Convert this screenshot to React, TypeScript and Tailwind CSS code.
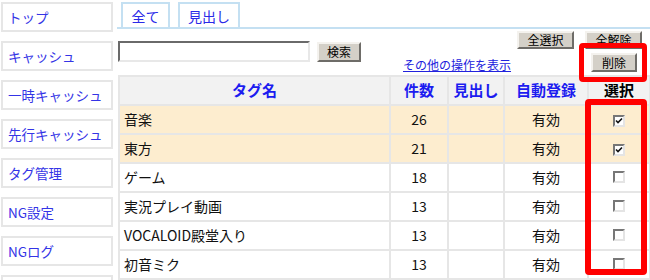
import React from 'react';

const FONT = { fontFamily: '"Noto Sans CJK JP", "Liberation Sans", sans-serif' };

const NAV = ['トップ', 'キャッシュ', '一時キャッシュ', '先行キャッシュ', 'タグ管理', 'NG設定', 'NGログ', ''];

const ROWS = [
  { name: '音楽', count: 26, checked: true },
  { name: '東方', count: 21, checked: true },
  { name: 'ゲーム', count: 18, checked: false },
  { name: '実況プレイ動画', count: 13, checked: false },
  { name: 'VOCALOID殿堂入り', count: 13, checked: false },
  { name: '初音ミク', count: 13, checked: false },
];

function Btn({ children, className = '' }: { children: React.ReactNode; className?: string }) {
  return (
    <button
      className={`flex items-center justify-center bg-[#d4d0c8] border-2 border-t-[#f4f2ee] border-l-[#f4f2ee] border-b-[#6e6c68] border-r-[#6e6c68] text-[12px] leading-none text-black ${className}`}
    >
      {children}
    </button>
  );
}

function Check({ on }: { on: boolean }) {
  return (
    <span className="inline-flex items-center justify-center w-[12px] h-[12px] bg-white border-2 border-t-[#777] border-l-[#777] border-b-[#e4e4e4] border-r-[#e4e4e4]">
      {on && (
        <svg width="8" height="8" viewBox="0 0 8 8">
          <path d="M1 3.5 L3 5.5 L7 1.5" stroke="#111" strokeWidth="1.6" fill="none" />
        </svg>
      )}
    </span>
  );
}

export default function App() {
  return (
    <div className="flex w-[650px] h-[280px] overflow-hidden bg-white text-[13px]" style={FONT}>
      {/* sidebar */}
      <div className="w-[117px] shrink-0 flex flex-col gap-[9px] pl-[1px] pt-[2px]">
        {NAV.map((n, i) => (
          <div key={i} className="w-[112px] h-[30px] shrink-0 border-2 border-[#e6e6e6] flex items-center pl-[5px] text-[13.5px] text-[#3434e6]">
            {n}
          </div>
        ))}
      </div>

      {/* main */}
      <div className="relative flex-1 flex flex-col">
        <div className="flex gap-[8px] pl-[4px] pt-[2px] border-b-2 border-[#c4e0f2] h-[29px]">
          <div className="w-[49px] h-[27px] border-2 border-b-0 border-[#c4e0f2] flex items-center justify-center text-[14px] text-[#2a2ae8]">全て</div>
          <div className="w-[62px] h-[27px] border-2 border-b-0 border-[#c4e0f2] flex items-center justify-center text-[14px] text-[#2a2ae8]">見出し</div>
        </div>

        <div className="flex h-[49px] pl-[1px]">
          <div className="flex items-start gap-[7px] pt-[12px]">
            <input className="w-[192px] h-[21px] bg-white border-2 border-t-[#6a6a6a] border-l-[#6a6a6a] border-b-[#e8e8e8] border-r-[#e8e8e8] outline-none" />
            <Btn className="w-[44px] h-[20px] mt-[1px]">検索</Btn>
          </div>
          <div className="ml-[42px] pt-[26px]">
            <span className="text-[12px] text-[#2222dd] underline">その他の操作を表示</span>
          </div>
          <div className="ml-auto mr-[9px] flex flex-col items-end pt-[2px]">
            <div className="flex gap-[11px]">
              <Btn className="w-[57px] h-[18px]">全選択</Btn>
              <Btn className="w-[57px] h-[18px]">全解除</Btn>
            </div>
            <Btn className="w-[46px] h-[19px] mt-[4px] mr-[5px]">削除</Btn>
          </div>
        </div>

        <table className="w-[531px] ml-[1px] border-collapse border-2 border-[#e6e6e6] table-fixed text-[14px]">
          <colgroup>
            <col className="w-[271px]" />
            <col className="w-[58px]" />
            <col className="w-[56px]" />
            <col className="w-[84px]" />
            <col className="w-[62px]" />
          </colgroup>
          <thead>
            <tr className="h-[29px] bg-[#f2f2f2] text-[15px] font-bold">
              <th className="border-2 border-[#e6e6e6] text-[#1c1cf0] font-bold">タグ名</th>
              <th className="border-2 border-[#e6e6e6] text-[#1c1cf0] font-bold">件数</th>
              <th className="border-2 border-[#e6e6e6] text-[#1c1cf0] font-bold">見出し</th>
              <th className="border-2 border-[#e6e6e6] text-[#1c1cf0] font-bold">自動登録</th>
              <th className="border-2 border-[#e6e6e6] text-black font-bold">選択</th>
            </tr>
          </thead>
          <tbody>
            {ROWS.map((r) => (
              <tr key={r.name} className={`h-[29px] ${r.checked ? 'bg-[#fdedcf]' : 'bg-white'}`}>
                <td className="border-2 border-[#e6e6e6] pl-[4px] text-[#111]">{r.name}</td>
                <td className="border-2 border-[#e6e6e6] text-center text-[#111]">{r.count}</td>
                <td className="border-2 border-[#e6e6e6]" />
                <td className="border-2 border-[#e6e6e6] text-center text-[#111]">有効</td>
                <td className="border-2 border-[#e6e6e6] text-center">
                  <span className="inline-flex pt-[2px]"><Check on={r.checked} /></span>
                </td>
              </tr>
            ))}
          </tbody>
        </table>

        {/* red highlight overlays */}
        <div className="absolute left-[462px] top-[43px] w-[68px] h-[39px] border-[5px] border-[#ff0000] rounded-[4px]" />
        <div className="absolute left-[468px] top-[99px] w-[62px] h-[176px] border-[6px] border-[#ff0000] rounded-[4px]" />
      </div>
    </div>
  );
}
